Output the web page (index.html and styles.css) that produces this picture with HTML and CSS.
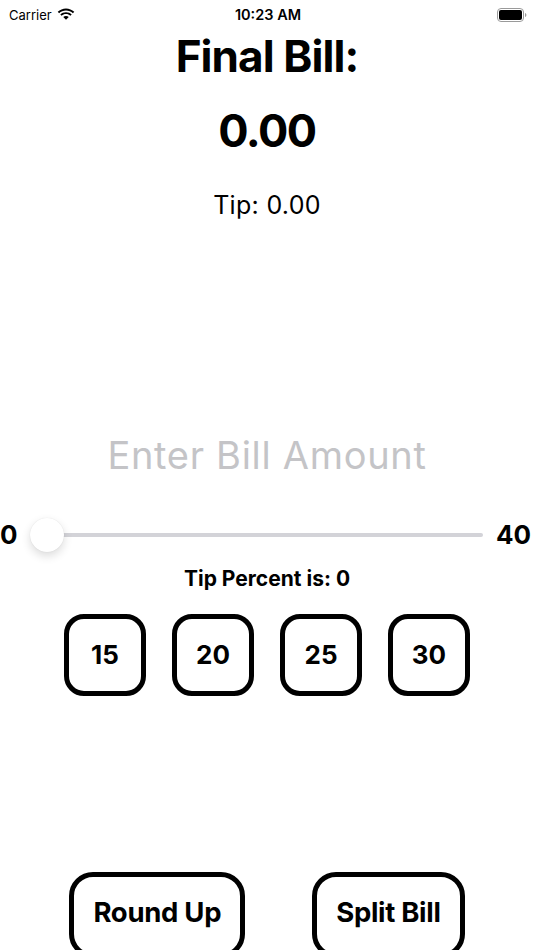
FILE: index.html
```html
<!DOCTYPE html>
<html>

<head>
  <meta name="viewport" content="width=device-width, initial-scale=1" />
  <link rel="stylesheet" href="styles.css">
</head>

<body>
  <div id="screen">
    <div id="status-bar">
      <div class="status-left">
        <span class="carrier">Carrier</span>
        <svg class="wifi" width="18" height="13" viewBox="0 0 17 12">
          <path d="M8.5 2.2c2.5 0 4.8 1 6.5 2.6l1.3-1.3C14.2 1.5 11.5.3 8.5.3S2.8 1.5.7 3.5L2 4.8c1.7-1.6 4-2.6 6.5-2.6z" fill="#000" />
          <path d="M8.5 5.6c1.6 0 3 .6 4.1 1.6l1.3-1.3C12.5 4.6 10.6 3.8 8.5 3.8S4.5 4.6 3.1 5.9l1.3 1.3c1.1-1 2.5-1.6 4.1-1.6z" fill="#000" />
          <path d="M8.5 7.4c-1 0-1.9.4-2.6 1L8.5 11l2.6-2.6c-.7-.6-1.6-1-2.6-1z" fill="#000" />
        </svg>
      </div>
      <span class="clock">10:23 AM</span>
      <div class="status-right">
        <svg class="battery" width="30" height="14" viewBox="0 0 30 14">
          <rect x="0.5" y="0.5" width="26" height="13" rx="3.5" fill="none" stroke="#9a9a9a" />
          <rect x="2" y="2" width="23" height="10" rx="2" fill="#000" />
          <path d="M28 5v4c.8-.3 1.4-1.1 1.4-2s-.6-1.7-1.4-2z" fill="#9a9a9a" />
        </svg>
      </div>
    </div>

    <h1 id="title">Final Bill:</h1>
    <div id="total">0.00</div>
    <div id="tip">Tip: 0.00</div>

    <input id="bill" type="text" placeholder="Enter Bill Amount" />

    <div id="slider-row">
      <span class="slider-label">0</span>
      <div class="slider">
        <div class="track"></div>
        <div class="thumb"></div>
      </div>
      <span class="slider-label">40</span>
    </div>

    <div id="tip-percent">Tip Percent is: 0</div>

    <div id="presets">
      <button class="preset">15</button>
      <button class="preset">20</button>
      <button class="preset">25</button>
      <button class="preset">30</button>
    </div>

    <div id="actions">
      <button class="action">Round Up</button>
      <button class="action">Split Bill</button>
    </div>
  </div>
</body>

</html>
```

FILE: styles.css
```css
/* page */
html,
body {
  margin: 0;
  padding: 0;
  background: #ffffff;
}

body {
  font-family: Inter, "Noto Sans", Arial, sans-serif;
  color: #000000;
}

#screen {
  width: 534px;
  height: 950px;
  overflow: hidden;
  display: flex;
  flex-direction: column;
  align-items: center;
}

/* status bar */
#status-bar {
  width: 100%;
  height: 28px;
  display: flex;
  align-items: center;
  justify-content: space-between;
  box-sizing: border-box;
  padding: 6px 7px 0 9px;
}

.status-left,
.status-right {
  width: 100px;
  display: flex;
  align-items: center;
}

.status-right {
  justify-content: flex-end;
}

.carrier {
  font-size: 13px;
  margin-right: 5px;
}

.wifi {
  margin-top: -1px;
}

.clock {
  font-size: 14.5px;
  font-weight: 600;
}

.battery {
  margin-top: 1px;
}

/* totals */
#title {
  margin: 7px 0 0;
  font-size: 44px;
  line-height: 1.2;
  font-weight: 700;
  letter-spacing: -0.9px;
}

#total {
  margin-top: 21px;
  font-size: 45px;
  line-height: 1.2;
  font-weight: 700;
  letter-spacing: -1.5px;
}

#tip {
  margin-top: 32px;
  font-size: 25px;
  line-height: 1.2;
  letter-spacing: 0.3px;
}

#bill {
  margin-top: 212px;
  width: 420px;
  border: none;
  outline: none;
  padding: 0;
  font-family: inherit;
  font-size: 38px;
  line-height: 1.2;
  height: 46px;
  text-align: center;
  letter-spacing: 0.7px;
  background: transparent;
}

#bill::placeholder {
  color: #c4c4c7;
}

/* slider */
#slider-row {
  margin-top: 40px;
  width: 100%;
  height: 34px;
  display: flex;
  align-items: center;
  box-sizing: border-box;
  padding: 0 3px 0 0;
}

.slider-label {
  font-size: 26px;
  font-weight: 700;
}

.slider {
  flex: 1;
  position: relative;
  height: 34px;
  margin: 0 13px 0 12px;
}

.track {
  position: absolute;
  left: 17px;
  right: 0;
  top: 15px;
  height: 4px;
  border-radius: 2px;
  background: #d3d3d8;
}

.thumb {
  position: absolute;
  left: 0;
  top: 0;
  width: 34px;
  height: 34px;
  border-radius: 50%;
  background: #ffffff;
  box-shadow: 0 4px 10px rgba(0, 0, 0, 0.14), 0 0 1px rgba(0, 0, 0, 0.12);
}

#tip-percent {
  margin-top: 14px;
  font-size: 21px;
  line-height: 1.2;
  font-weight: 700;
}

/* buttons */
#presets {
  margin-top: 23px;
  display: flex;
  gap: 26px;
}

.preset {
  width: 82px;
  height: 82px;
  box-sizing: border-box;
  border: 5px solid #000000;
  border-radius: 20px;
  background: #ffffff;
  font-family: inherit;
  font-size: 26px;
  font-weight: 700;
  color: #000000;
  padding: 0;
}

#actions {
  margin-top: 176px;
  display: flex;
  gap: 67px;
}

.action {
  height: 86px;
  box-sizing: border-box;
  border: 5px solid #000000;
  border-radius: 24px;
  background: #ffffff;
  font-family: inherit;
  font-size: 27.5px;
  font-weight: 700;
  letter-spacing: -0.3px;
  color: #000000;
  padding: 0 19px 6px;
}
```
